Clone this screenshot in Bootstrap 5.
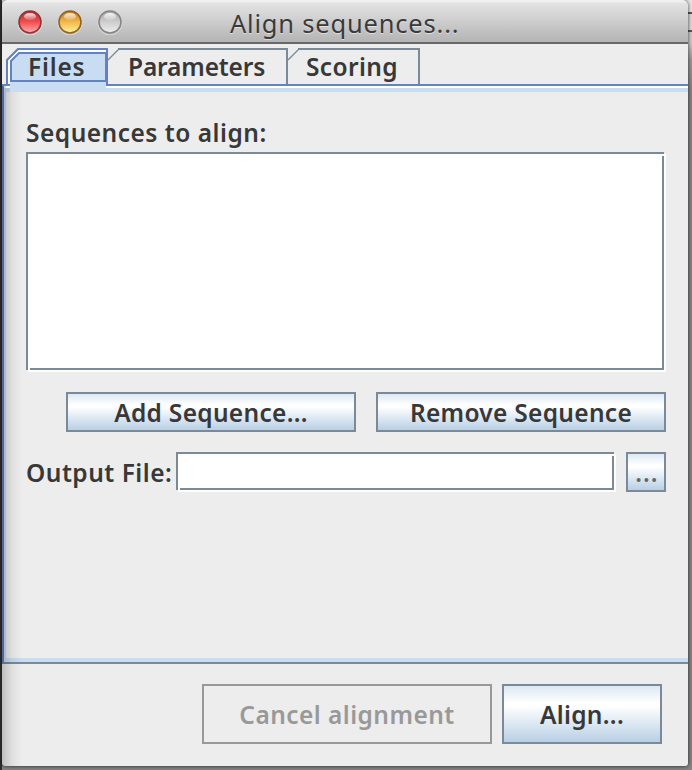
<!DOCTYPE html>
<html lang="en">
<head>
<meta charset="utf-8">
<meta name="viewport" content="width=device-width, initial-scale=1">
<title>Align sequences...</title>
<link href="https://cdn.jsdelivr.net/npm/bootstrap@5.3.0/dist/css/bootstrap.min.css" rel="stylesheet">
<style>
html, body { height: 770px; overflow: hidden; }
body { font-family: "Noto Sans", "Open Sans", sans-serif; font-size: 24.500px; font-weight: 600; line-height: 32px; color: #383838; background: #858585; }
.desk { width: 692px; height: 770px; padding: 0 4px 4px 2px; background: linear-gradient(90deg, #303030 0 2px, transparent 2px), linear-gradient(#e8e8e8 0 12px, #555 12px 14px, #ddd 14px 30px, #555 30px 32px, #cfcfcf 32px 42px, #9a9a9a 60px, #858585 90px); }
.win { height: 766px; background: #ededed; box-shadow: 0 0 4px rgba(0,0,0,.75); border-radius: 6px 6px 3px 3px; overflow: hidden; }
.win::after { content: ""; position: absolute; left: 2px; top: 86px; width: 20px; height: 680px; background: linear-gradient(90deg, rgba(0,0,0,.2), rgba(0,0,0,.06) 50%, transparent); pointer-events: none; }
.titlebar { height: 44px; border-bottom: 2px solid #686868; background: linear-gradient(#f0f0f0 0 2px, #e3e3e3 3px, #b4b4b4 42px); padding-left: 16px; }
.caption { font-size: 25.500px; font-weight: 400; color: #3a3a3a; text-shadow: 0 1px 0 rgba(255,255,255,.5); padding-left: 106px; padding-top: 3px; letter-spacing: .8px; }
.tabstrip { height: 40px; padding: 4px 0 0 4px; }
.tab { height: 38px; position: relative; z-index: 1; }
.tab svg { position: absolute; left: 0; top: 0; }
.tab span { position: absolute; top: 3px; white-space: nowrap; }
.t1 { width: 102px; } .t2 { width: 180px; } .t3 { width: 132px; }
.t1 span { left: 22px; letter-spacing: .8px; } .t2 span { left: 20px; letter-spacing: -.15px; } .t3 span { left: 18px; letter-spacing: .35px; }
.pane { height: 580px; border-top: 2px solid #6382bf; border-left: 2px solid #6382bf; border-bottom: 2px solid #7a8a99; box-shadow: inset 0 2px #fff, inset 0 6px #c8ddf2, inset 2px 0 #c8ddf2, inset 0 -4px #c8ddf2; padding: 31px 22px 0 22px; }
.well { position: relative; background: #fff; border: 2px solid #7a8a99; box-shadow: 2px 2px #fff; }
.well::before, .well::after { content: ""; position: absolute; width: 2px; height: 2px; background: #fff; }
.well::before { right: -2px; top: 0; }
.well::after { left: 0; bottom: -2px; }
.listbox { width: 638px; height: 218px; margin-top: 3px; }
.btn-line { padding: 22px 0 0 40px; gap: 20px; }
.out-line { margin-top: 20px; }
.outlab { width: 150px; padding-top: 5px; }
.outbox { width: 438px; height: 38px; }
.jbtn { --bs-btn-border-width: 2px; --bs-btn-border-radius: 0; --bs-btn-padding-x: 0; --bs-btn-padding-y: 0; --bs-btn-font-size: 24.500px; --bs-btn-font-weight: 600; --bs-btn-line-height: 32px; --bs-btn-color: #383838; --bs-btn-border-color: #7a8a99; font-family: inherit; padding-top: 2px; letter-spacing: .3px; background: linear-gradient(#dde8f3, #fff 30%, #fff 36%, #b8cfe5); white-space: nowrap; }
.wide { width: 290px; height: 40px; }
.dots { width: 40px; height: 40px; margin-left: 12px; padding-left: 2px; color: #666; letter-spacing: 1px; }
.tall { height: 60px; }
.jbtn.off { background: #ededed; border-color: #999; color: #999; opacity: 1; letter-spacing: .45px; }
.go { width: 160px; }
.footer-row { padding: 20px 26px 0 0; gap: 10px; }
.lab { white-space: nowrap; letter-spacing: .5px; }
</style>
<script src="https://cdn.jsdelivr.net/npm/bootstrap@5.3.0/dist/js/bootstrap.bundle.min.js"></script>
</head>
<body>
<div class="desk">
 <main class="win">
  <header class="titlebar d-flex align-items-center">
   <svg width="106" height="28" viewBox="0 0 106 28">
    <defs>
     <linearGradient id="r" x2="0" y2="1"><stop offset="0" stop-color="#b52a2e"/><stop offset=".5" stop-color="#f24e50"/><stop offset="1" stop-color="#ffb0b0"/></linearGradient>
     <linearGradient id="y" x2="0" y2="1"><stop offset="0" stop-color="#c57a1e"/><stop offset=".5" stop-color="#f3b84a"/><stop offset="1" stop-color="#fff1a0"/></linearGradient>
     <linearGradient id="g" x2="0" y2="1"><stop offset="0" stop-color="#a9a9a9"/><stop offset=".5" stop-color="#cecece"/><stop offset="1" stop-color="#efefef"/></linearGradient>
     <linearGradient id="s" x2="0" y2="1"><stop offset="0" stop-color="#fff" stop-opacity=".9"/><stop offset="1" stop-color="#fff" stop-opacity=".15"/></linearGradient>
    </defs>
    <g fill="none" stroke="#fff" stroke-opacity=".4"><circle cx="12" cy="16" r="12"/><circle cx="52" cy="16" r="12"/><circle cx="92" cy="16" r="12"/></g>
    <g stroke-width="1.6"><circle cx="12" cy="15" r="11" fill="url(#r)" stroke="#8d3436"/><circle cx="52" cy="15" r="11" fill="url(#y)" stroke="#8f6226"/><circle cx="92" cy="15" r="11" fill="url(#g)" stroke="#858585"/></g>
    <g fill="url(#s)"><ellipse cx="12" cy="9.500" rx="6" ry="3.500"/><ellipse cx="52" cy="9.500" rx="6" ry="3.500"/><ellipse cx="92" cy="9.500" rx="6" ry="3.500"/></g>
   </svg>
   <div class="caption">Align sequences...</div>
  </header>
  <nav class="tabstrip d-flex">
   <div class="tab t1">
    <svg width="102" height="44" viewBox="0 0 102 44">
     <path d="M0 36V12L12 0H102V36H100V44H4V36Z" fill="#c8ddf2"/>
     <path d="M3 37V13L13 3H100" fill="none" stroke="#fff" stroke-width="2"/>
     <path d="M0 36h4v2H0z" fill="#6382bf"/><path d="M0 38h4v2H0z" fill="#fff"/>
     <path d="M1 37V12L12 1H101V38M5 33V13L13 5H100V33H4" fill="none" stroke="#6382bf" stroke-width="2"/>
     <path d="M100 38h2v2h-2z" fill="#fff"/>
    </svg><span>Files</span>
   </div>
   <div class="tab t2">
    <svg width="180" height="36" viewBox="0 0 180 36"><path d="M10 1H179V36" fill="none" stroke="#7a8a99" stroke-width="2"/><path d="M0 12L11 1" stroke="#7a8a99" stroke-width="1.300"/></svg><span>Parameters</span>
   </div>
   <div class="tab t3">
    <svg width="132" height="36" viewBox="0 0 132 36"><path d="M10 1H131V36" fill="none" stroke="#7a8a99" stroke-width="2"/><path d="M0 12L11 1" stroke="#7a8a99" stroke-width="1.300"/></svg><span>Scoring</span>
   </div>
  </nav>
  <section class="pane">
   <div class="lab">Sequences to align:</div>
   <div class="well listbox"></div>
   <div class="btn-line d-flex">
    <button class="btn jbtn wide">Add Sequence...</button>
    <button class="btn jbtn wide">Remove Sequence</button>
   </div>
   <div class="out-line d-flex">
    <div class="lab outlab">Output File:</div>
    <div class="well outbox"></div>
    <button class="btn jbtn dots">...</button>
   </div>
  </section>
  <footer class="footer-row d-flex justify-content-end">
   <button class="btn jbtn wide tall off" disabled>Cancel alignment</button>
   <button class="btn jbtn tall go">Align...</button>
  </footer>
 </main>
</div>
</body>
</html>
